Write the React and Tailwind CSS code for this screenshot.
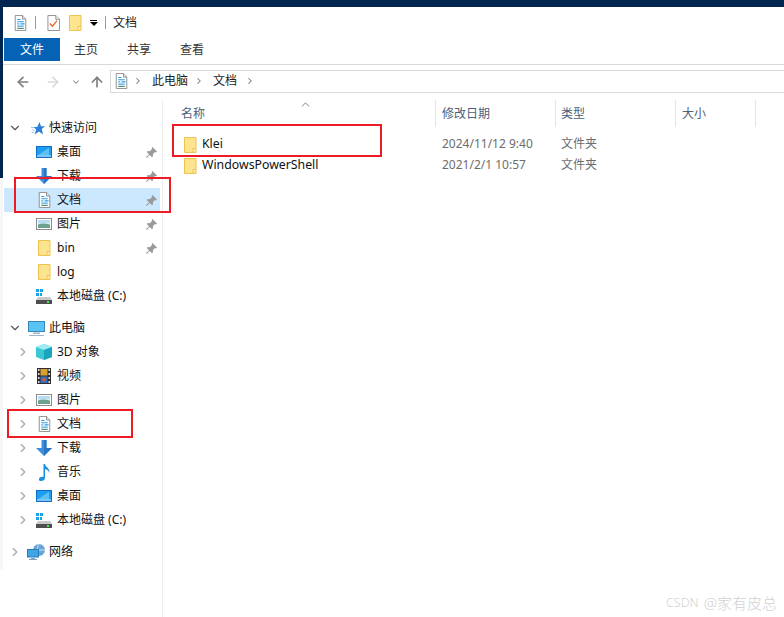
import { ArrowLeft, ArrowRight, ArrowUp, ChevronDown, ChevronRight, ChevronUp } from "lucide-react";

const font = { fontFamily: '"Noto Sans", "Noto Sans CJK SC", sans-serif' };

const DocIcon = () => (
  <svg width="13" height="16" viewBox="0 0 16 18" preserveAspectRatio="none">
    <path d="M1.500.5h9l4 4v13h-13z" fill="#fff" stroke="#7f7f7f" />
    <path d="M10.500.5v4h4" fill="#eee" stroke="#7f7f7f" />
    <path d="M4 5h4M4 7.500h8M8 10h5" stroke="#2b9be8" strokeWidth="1.200" />
    <path d="M4 10h2.500M4 12.500h8" stroke="#4aa7e0" strokeWidth="1.200" />
    <path d="M4 15h8" stroke="#3f7d55" strokeWidth="1.200" />
  </svg>
);

const CheckDocIcon = () => (
  <svg width="13" height="16" viewBox="0 0 14 17" preserveAspectRatio="none">
    <path d="M1 .5h8.500l4 4v12H1z" fill="#fff" stroke="#8c8c8c" />
    <path d="M9.500.5v4h4" fill="#eee" stroke="#8c8c8c" />
    <path d="M3 9l2.800 3 5-6" fill="none" stroke="#e8622c" strokeWidth="1.500" />
  </svg>
);

const FolderIcon = () => (
  <svg width="13" height="16" viewBox="0 0 13 16" className="shrink-0">
    <path d="M.5.5h11.500v15H.5z" fill="#fde48f" stroke="#eec24f" />
    <path d="M9 15.500v-4h3" fill="#fff3c4" stroke="#eec24f" />
  </svg>
);

const DesktopIcon = () => (
  <svg width="16" height="12" viewBox="0 0 16 12">
    <rect x=".5" y=".5" width="15" height="11" fill="#1e9ef0" stroke="#0a6fc2" />
    <path d="M2 9L13 2v7z" fill="#5cc1f7" />
    <path d="M1 10h14" stroke="#d9effc" />
  </svg>
);

const DownloadIcon = () => (
  <svg width="16" height="16" viewBox="0 0 16 16">
    <path d="M5.500 0h5v8H16l-8 8-8-8h5.500z" fill="#3d8fdd" />
    <path d="M8 0h2.500v8H16l-8 8z" fill="#2a76c4" />
  </svg>
);

const PictureIcon = () => (
  <svg width="16" height="12" viewBox="0 0 16 12">
    <rect x=".5" y=".5" width="15" height="11" fill="#fff" stroke="#8c8c8c" />
    <rect x="2" y="2" width="12" height="3.500" fill="#b5dcf0" />
    <path d="M2 6.500c3-1.500 7-1.500 12 0V10H2z" fill="#6f9f8f" />
  </svg>
);

const DriveIcon = () => (
  <svg width="16" height="15" viewBox="0 0 16 15">
    <path d="M0 0h3v3H0zM4 0h3v3H4zM0 4h3v3H0zM4 4h2v3H4z" fill="#17a5ea" />
    <path d="M2 8h12l2 3H0z" fill="#c9c9c9" />
    <rect y="11" width="16" height="4" fill="#4f4f4f" />
    <rect x="11" y="12" width="2" height="2" fill="#4fe06a" />
  </svg>
);

const PcIcon = () => (
  <svg width="17" height="15" viewBox="0 0 17 15">
    <rect x=".5" y=".5" width="16" height="10" fill="#57c4f5" stroke="#3a87b7" />
    <path d="M5 11.500h7v1.500H5z" fill="#9ab6c8" />
    <path d="M1 14.500h15" stroke="#9ab6c8" />
  </svg>
);

const CubeIcon = () => (
  <svg width="16" height="16" viewBox="0 0 16 16">
    <path d="M8 0l8 3v10l-8 3-8-3V3z" fill="#3bc7d6" />
    <path d="M0 3l8 3 8-3-8-3z" fill="#9eecf2" />
    <path d="M8 6l8-3v10l-8 3z" fill="#1ba5bd" />
  </svg>
);

const FilmIcon = () => (
  <svg width="14" height="16" viewBox="0 0 14 16">
    <rect width="14" height="16" fill="#2e2e2e" />
    <path d="M1 1h1.500v2H1zM1 5h1.500v2H1zM1 9h1.500v2H1zM1 13h1.500v2H1zM11.500 1H13v2h-1.500zM11.500 5H13v2h-1.500zM11.500 9H13v2h-1.500zM11.500 13H13v2h-1.500z" fill="#ddd" />
    <rect x="3.500" y="1" width="7" height="6.500" fill="#d9a02e" />
    <rect x="3.500" y="8.500" width="7" height="6.500" fill="#3a6fc0" />
    <rect x="5.500" y="10" width="3" height="3" fill="#d9572e" />
  </svg>
);

const MusicIcon = () => (
  <svg width="11" height="17" viewBox="0 0 11 17">
    <path d="M4.500 0h1.500c.3 3 5 4 4.500 9-.8-2.500-2.500-3.500-4.500-4v9c0 2-2 3-4 3-1.500 0-2.500-1-2-2.300.6-1.500 2.800-2.200 4.500-1.700z" fill="#1a8fe3" />
  </svg>
);

const NetworkIcon = () => (
  <svg width="18" height="16" viewBox="0 0 18 16">
    <circle cx="12" cy="6" r="6" fill="#6aa4d8" />
    <path d="M12 0c-2 2-2 9 0 12M6 6h12" stroke="#cfe4f4" fill="none" />
    <rect x=".5" y="5.500" width="11" height="7.500" fill="#3ea6e6" stroke="#2a7cb5" />
    <path d="M4 14h4v1H4zM2 15h8v1H2z" fill="#7fa4bd" />
  </svg>
);

const StarIcon = () => (
  <svg width="14" height="13" viewBox="0 0 14 13" className="ml-[3px]">
    <path d="M8.500 0l1.500 4.300h4L10.800 7l1.200 5.500L8 9.500 3.500 12.500 5.200 7.500 2.500 5h3.700z" fill="#2f7fd6" />
    <path d="M0 5.500h3M1 8h2.500M.5 10.500H3" stroke="#9cc8ee" />
  </svg>
);

const PinIcon = () => (
  <svg width="11" height="11" viewBox="0 0 11 11" className="shrink-0">
    <path d="M6.500 0L11 4.500 9.800 5.400 9 5l-2.200 2.200.3 2L6 10.300 3.700 8 .7 11 0 10.300l3-3L.7 5l1.100-1.100 2 .3L6 2l-.4-.8z" fill="#9a9a9a" />
  </svg>
);

const Row = ({ icon, label, pin, expand, selected, top }) => (
  <div className={`h-6 flex items-center ${selected ? "bg-[#cce8ff]" : ""}`}>
    {top ? (
      <span className="w-[22px] flex justify-center">
        {expand === "open" ? (
          <ChevronDown size={14} strokeWidth={2} className="text-[#555]" />
        ) : (
          <ChevronRight size={14} strokeWidth={2} className="text-[#a6a6a6]" />
        )}
      </span>
    ) : (
      <span className="w-[30px] pr-[4px] flex justify-end">
        {expand && <ChevronRight size={14} strokeWidth={2} className="text-[#a6a6a6]" />}
      </span>
    )}
    <span className={`flex justify-center ${top ? "w-5" : "w-[16px] ml-[2px]"}`}>{icon}</span>
    <span className={`${top ? "ml-[3px]" : "ml-[5px]"} flex-1 text-[12px] text-[#111]`}>{label}</span>
    {pin && (
      <span className="pr-[3px]">
        <PinIcon />
      </span>
    )}
  </div>
);

const quick = [
  { icon: <DesktopIcon />, label: "桌面", pin: true },
  { icon: <DownloadIcon />, label: "下载", pin: true },
  { icon: <DocIcon />, label: "文档", pin: true, selected: true },
  { icon: <PictureIcon />, label: "图片", pin: true },
  { icon: <FolderIcon />, label: "bin", pin: true },
  { icon: <FolderIcon />, label: "log" },
  { icon: <DriveIcon />, label: "本地磁盘 (C:)" },
];

const pc = [
  { icon: <CubeIcon />, label: "3D 对象" },
  { icon: <FilmIcon />, label: "视频" },
  { icon: <PictureIcon />, label: "图片" },
  { icon: <DocIcon />, label: "文档" },
  { icon: <DownloadIcon />, label: "下载" },
  { icon: <MusicIcon />, label: "音乐" },
  { icon: <DesktopIcon />, label: "桌面" },
  { icon: <DriveIcon />, label: "本地磁盘 (C:)" },
];

const files = [
  { name: "Klei", date: "2024/11/12 9:40" },
  { name: "WindowsPowerShell", date: "2021/2/1 10:57" },
];

export default function App() {
  return (
    <div className="relative w-[784px] h-[617px] bg-white overflow-hidden" style={font}>
      {/* desktop showing behind the window */}
      <div className="h-[7px] bg-[#00264f]" />
      <div className="absolute left-0 top-0 w-[3px] h-[178px] bg-[#00264f]" />
      <div className="absolute left-0 top-[178px] w-[3px] h-[392px] bg-[#f7f7f7]" />

      <div className="pl-[3px]">
        {/* quick access bar */}
        <div className="h-[31px] flex items-center pl-[11px]">
          <DocIcon />
          <span className="ml-[8px] w-px h-[13px] bg-[#9a9a9a]" />
          <span className="ml-[11px]">
            <CheckDocIcon />
          </span>
          <span className="ml-[9px]">
            <FolderIcon />
          </span>
          <span className="ml-[7px] flex flex-col items-center gap-[1px] w-[9px]">
            <span className="w-[7px] h-px bg-black" />
            <span className="w-0 h-0 border-x-[4px] border-x-transparent border-t-[4px] border-t-black" />
          </span>
          <span className="ml-[7px] w-px h-[13px] bg-[#9a9a9a]" />
          <span className="ml-[7px] text-[12px] text-[#222]">文档</span>
        </div>

        {/* ribbon tabs */}
        <div className="h-[27px] flex items-start pl-px border-b border-[#d9d9d9] text-[12px]">
          <div className="w-[56px] h-[23px] pt-px bg-[#0563b5] text-white flex items-center justify-center">文件</div>
          <div className="ml-[14px] h-[23px] pt-px flex items-center text-[#333]">主页</div>
          <div className="ml-[29px] h-[23px] pt-px flex items-center text-[#333]">共享</div>
          <div className="ml-[29px] h-[23px] pt-px flex items-center text-[#333]">查看</div>
        </div>

        {/* nav + address */}
        <div className="h-[28px] pt-[5px] flex items-start">
          <div className="w-[107px] h-[23px] flex items-center pl-[12px] text-[#7d7d7d]">
            <ArrowLeft size={16} strokeWidth={2.500} />
            <ArrowRight size={16} strokeWidth={2.500} className="ml-[14px] text-[#d9d9d9]" />
            <ChevronDown size={10} strokeWidth={2.500} className="ml-[10px] text-[#8a8a8a]" />
            <ArrowUp size={16} strokeWidth={2.500} className="ml-[8px]" />
          </div>
          <div className="flex-1 h-[23px] pb-px border border-[#d9d9d9] border-r-0 flex items-center pl-[4px] text-[12px] text-[#222]">
            <DocIcon />
            <ChevronRight size={10} strokeWidth={2.500} className="ml-[5px] text-[#777]" />
            <span className="ml-[9px]">此电脑</span>
            <ChevronRight size={10} strokeWidth={2.500} className="ml-[6px] text-[#777]" />
            <span className="ml-[9px]">文档</span>
            <ChevronRight size={10} strokeWidth={2.500} className="ml-[8px] text-[#777]" />
          </div>
        </div>
      </div>

      {/* body */}
      <div className="flex">
        <div className="w-[163px] h-[517px] mt-[7px] shrink-0 border-r border-[#eeeeee]">
          <div className="mt-[16px] ml-[4px] w-[156px]">
            <Row top expand="open" icon={<StarIcon />} label="快速访问" />
            {quick.map((r) => (
              <Row key={r.label} {...r} />
            ))}
            <div className="h-2" />
            <Row top expand="open" icon={<PcIcon />} label="此电脑" />
            {pc.map((r) => (
              <Row key={r.label} expand {...r} />
            ))}
            <div className="h-2" />
            <Row top expand="closed" icon={<NetworkIcon />} label="网络" />
          </div>
        </div>

        <div className="flex-1 pt-[7px] text-[12px]">
          <div className="relative h-[27px] flex text-[#4c607a]">
            <ChevronUp size={13} strokeWidth={1.500} className="absolute left-[136px] -top-[2px] text-[#666]" />
            <div className="w-[273px] border-r border-[#e5e5e5] pl-[18px] flex items-center">名称</div>
            <div className="w-[120px] border-r border-[#e5e5e5] pl-[6px] flex items-center">修改日期</div>
            <div className="w-[120px] border-r border-[#e5e5e5] pl-[5px] flex items-center">类型</div>
            <div className="w-[80px] border-r border-[#e5e5e5] pl-[6px] flex items-center">大小</div>
          </div>
          <div className="pt-[7px]">
            {files.map((f) => (
              <div key={f.name} className="h-[21px] flex items-center">
                <div className="w-[273px] pl-[21px] flex items-center">
                  <FolderIcon />
                  <span className="ml-[5px] text-[12.300px] text-[#111]">{f.name}</span>
                </div>
                <div className="w-[120px] pl-[6px] mb-[2px] text-[#6d6d6d]">{f.date}</div>
                <div className="pl-[5px] mb-[2px] text-[#6d6d6d]">文件夹</div>
              </div>
            ))}
          </div>
        </div>
      </div>

      {/* red annotation boxes */}
      <div className="absolute left-[14px] top-[177px] w-[157px] h-[36px] border-2 border-[#ed1c24]" />
      <div className="absolute left-[172px] top-[124px] w-[210px] h-[33px] border-2 border-[#ed1c24]" />
      <div className="absolute left-[7px] top-[409px] w-[126px] h-[29px] border-2 border-[#ed1c24]" />

      {/* watermark */}
      <div className="absolute right-[7px] top-[595px] flex items-center leading-4 text-[#d2d2d2] font-light">
        <span className="text-[12.500px]">CSDN</span>
        <span className="ml-[5px] text-[15px]">@家有皮总</span>
      </div>
    </div>
  );
}
